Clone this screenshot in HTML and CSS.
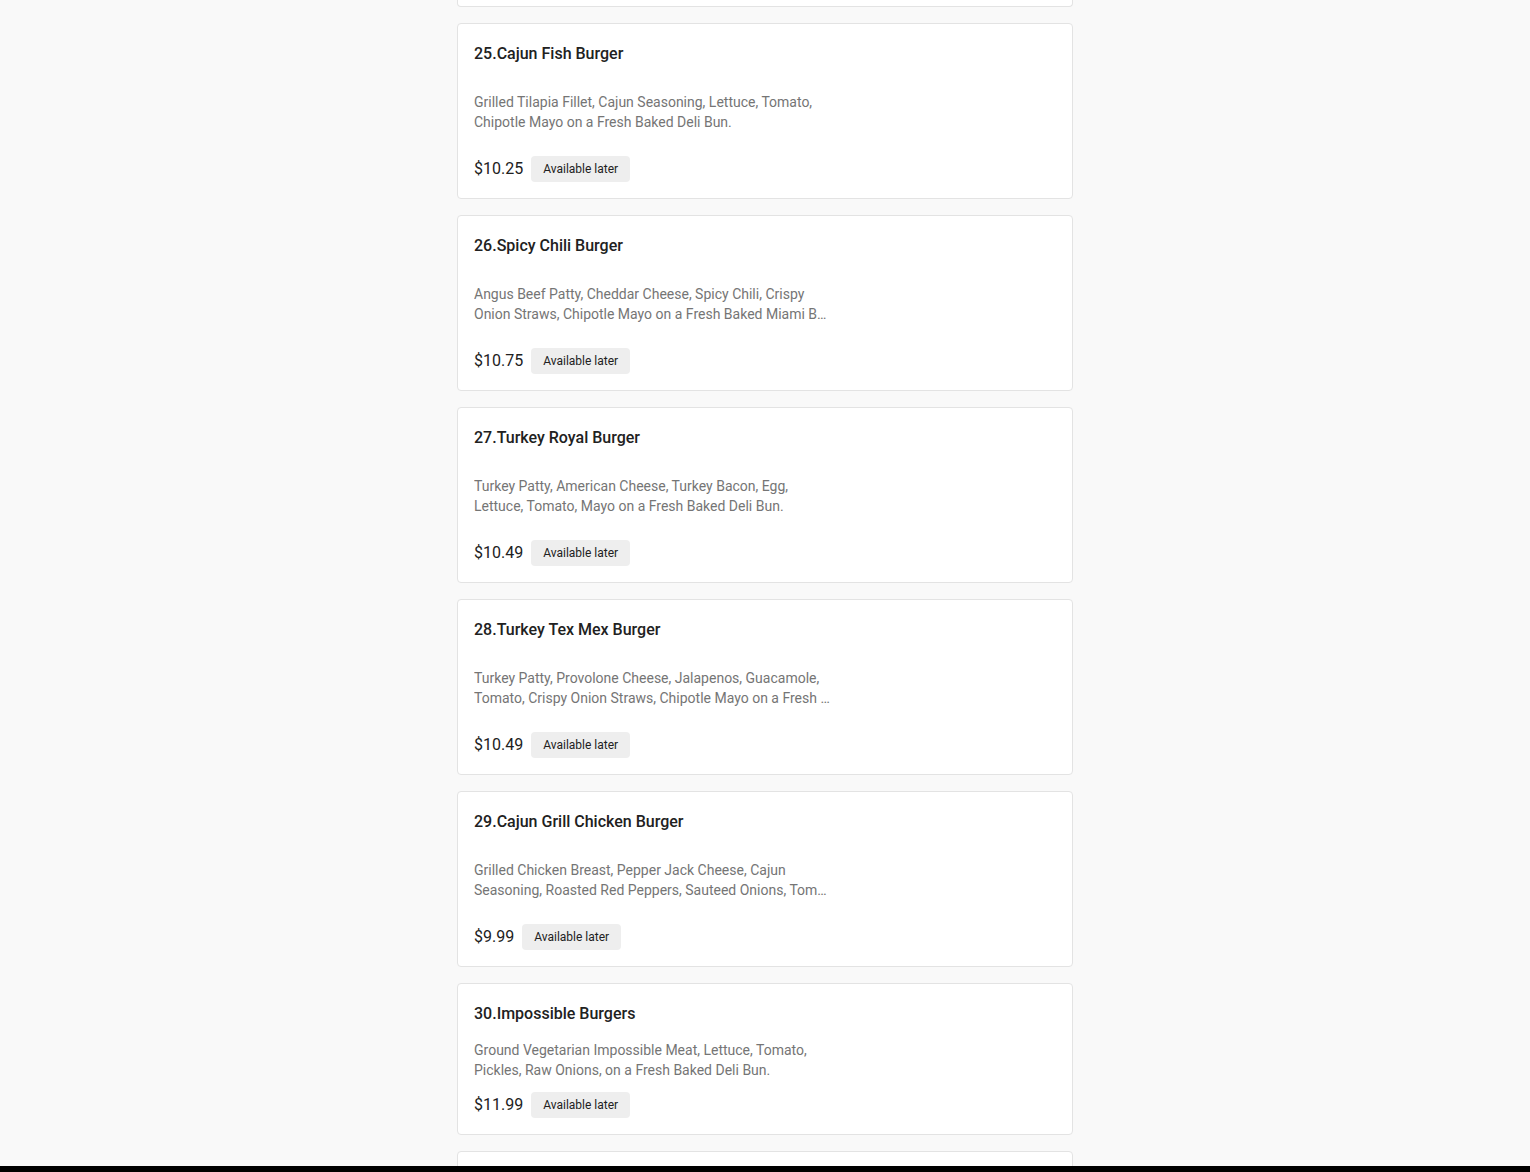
FILE: index.html
```html
<!DOCTYPE html>
<html lang="en">
<head>
<meta charset="utf-8">
<title>Menu</title>
<link rel="stylesheet" href="styles.css">
</head>
<body>
<main class="menu">
  <div class="card card-stub"></div>

  <article class="card">
    <h3 class="item-title">25.Cajun Fish Burger</h3>
    <div class="item-desc-box"><p class="item-desc"><span class="desc-line">Grilled Tilapia Fillet, Cajun Seasoning, Lettuce, Tomato,</span><span class="desc-line">Chipotle Mayo on a Fresh Baked Deli Bun.</span></p></div>
    <div class="item-foot"><span class="price">$10.25</span><span class="badge">Available later</span></div>
  </article>

  <article class="card">
    <h3 class="item-title">26.Spicy Chili Burger</h3>
    <div class="item-desc-box"><p class="item-desc"><span class="desc-line">Angus Beef Patty, Cheddar Cheese, Spicy Chili, Crispy</span><span class="desc-line">Onion Straws, Chipotle Mayo on a Fresh Baked Miami Bun.</span></p></div>
    <div class="item-foot"><span class="price">$10.75</span><span class="badge">Available later</span></div>
  </article>

  <article class="card">
    <h3 class="item-title">27.Turkey Royal Burger</h3>
    <div class="item-desc-box"><p class="item-desc"><span class="desc-line">Turkey Patty, American Cheese, Turkey Bacon, Egg,</span><span class="desc-line">Lettuce, Tomato, Mayo on a Fresh Baked Deli Bun.</span></p></div>
    <div class="item-foot"><span class="price">$10.49</span><span class="badge">Available later</span></div>
  </article>

  <article class="card">
    <h3 class="item-title">28.Turkey Tex Mex Burger</h3>
    <div class="item-desc-box"><p class="item-desc"><span class="desc-line">Turkey Patty, Provolone Cheese, Jalapenos, Guacamole,</span><span class="desc-line">Tomato, Crispy Onion Straws, Chipotle Mayo on a Fresh Baked Deli Bun.</span></p></div>
    <div class="item-foot"><span class="price">$10.49</span><span class="badge">Available later</span></div>
  </article>

  <article class="card">
    <h3 class="item-title">29.Cajun Grill Chicken Burger</h3>
    <div class="item-desc-box"><p class="item-desc"><span class="desc-line">Grilled Chicken Breast, Pepper Jack Cheese, Cajun</span><span class="desc-line">Seasoning, Roasted Red Peppers, Sauteed Onions, Tomato, Chipotle Mayo on a Fresh Baked Deli Bun.</span></p></div>
    <div class="item-foot"><span class="price">$9.99</span><span class="badge">Available later</span></div>
  </article>

  <article class="card">
    <h3 class="item-title">30.Impossible Burgers</h3>
    <div class="item-desc-box item-desc-box--auto"><p class="item-desc"><span class="desc-line">Ground Vegetarian Impossible Meat, Lettuce, Tomato,</span><span class="desc-line">Pickles, Raw Onions, on a Fresh Baked Deli Bun.</span></p></div>
    <div class="item-foot"><span class="price">$11.99</span><span class="badge">Available later</span></div>
  </article>

  <article class="card">
    <h3 class="item-title">31.Classic Burger</h3>
    <div class="item-desc-box"><p class="item-desc"><span class="desc-line">Angus Beef Patty, Lettuce, Tomato, Pickles,</span><span class="desc-line">Onions on a Fresh Baked Deli Bun.</span></p></div>
    <div class="item-foot"><span class="price">$9.49</span><span class="badge">Available later</span></div>
  </article>
</main>
<div class="bottom-bar"></div>
</body>
</html>
```

FILE: styles.css
```css
html, body {
  margin: 0;
  padding: 0;
}

body {
  background: #f9f9f9;
  font-family: Roboto, "Liberation Sans", Arial, sans-serif;
  color: #212121;
  overflow: hidden;
  height: 1172px;
}

.menu {
  width: 616px;
  margin: 0 auto;
  display: flex;
  flex-direction: column;
  gap: 16px;
}

.card {
  background: #ffffff;
  border: 1px solid #e3e3e3;
  border-radius: 4px;
  padding: 16px;
  box-sizing: border-box;
}

.card-stub {
  height: 7px;
  padding: 0;
  border-top: none;
  border-radius: 0 0 4px 4px;
}

.item-title {
  margin: 0;
  font-size: 16px;
  line-height: 28px;
  font-weight: 500;
  color: #212121;
}

.item-desc-box {
  height: 64px;
  margin-top: 12px;
  display: flex;
  align-items: center;
}

.item-desc-box--auto {
  height: auto;
}

.item-desc {
  margin: 0;
  width: 358px;
  font-size: 14px;
  line-height: 20px;
  color: #757575;
}

.desc-line {
  display: block;
  white-space: nowrap;
  overflow: hidden;
  text-overflow: ellipsis;
}

.item-foot {
  margin-top: 12px;
  display: flex;
  align-items: center;
  gap: 8px;
}

.price {
  font-size: 16px;
  line-height: 26px;
  color: #212121;
}

.badge {
  background: #eeeeee;
  border-radius: 4px;
  padding: 0 12px;
  height: 26px;
  line-height: 26px;
  font-size: 12px;
  color: #212121;
}

.bottom-bar {
  position: fixed;
  left: 0;
  right: 0;
  bottom: 0;
  height: 6px;
  background: #000000;
}
```
